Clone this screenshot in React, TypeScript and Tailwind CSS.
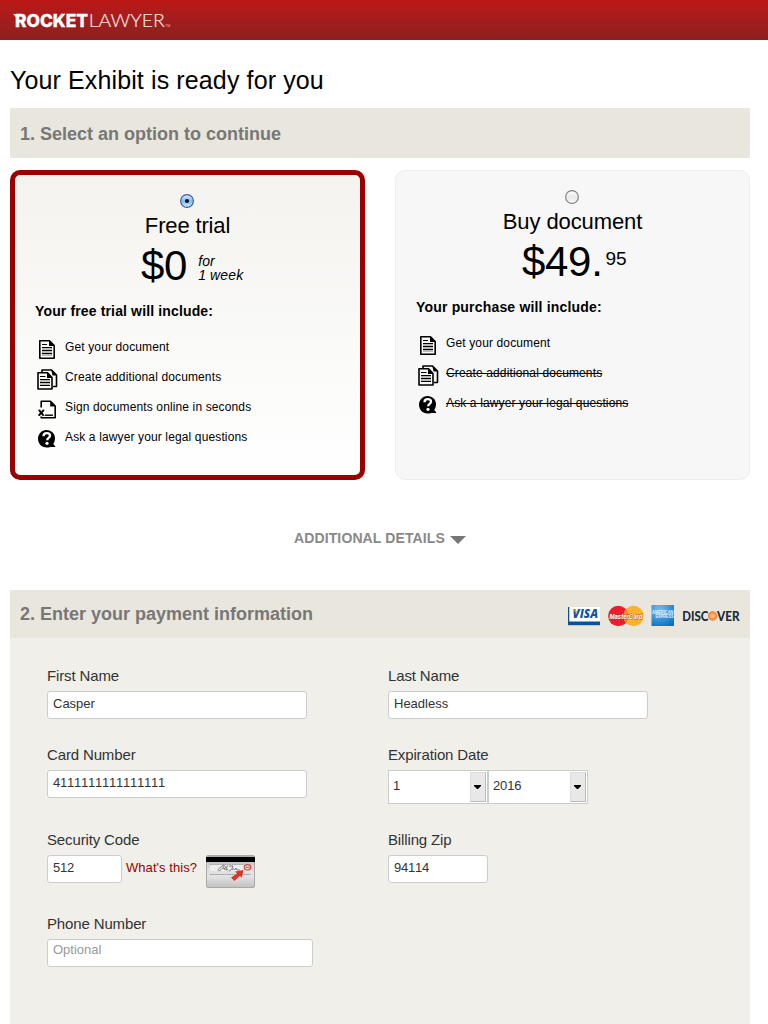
import type { ReactNode } from "react";

function Logo() {
  return (
    <svg width="170" height="24" viewBox="0 0 170 24" className="block overflow-visible">
      <text x="4" y="17.600" fill="#fff" stroke="#fff" strokeWidth=".3" fontFamily="Inter, sans-serif" fontWeight="800" fontSize="17" textLength="73" lengthAdjust="spacingAndGlyphs">ROCKET</text>
      <path d="M2.200 5.100H8V8.200H5Z" fill="#fff" />
      <text x="77.700" y="17.600" fill="#fff" stroke="#fff" strokeWidth=".15" fontFamily="Lato, sans-serif" fontWeight="300" fontSize="17.200" textLength="76" lengthAdjust="spacingAndGlyphs" opacity=".9">LAWYER</text>
      <text x="154" y="17.600" fill="#f0b8b8" fontFamily="Liberation Sans, sans-serif" fontSize="3.500">TM</text>
    </svg>
  );
}

function DocIcon() {
  return (
    <svg width="22" height="22" viewBox="0 0 22 22" className="block">
      <path d="M2.800 1.800H12.500L17.200 6.500V19.200H2.800Z" fill="none" stroke="#000" strokeWidth="1.600" strokeLinejoin="round" />
      <path d="M12 1.500L17.500 7H12Z" />
      <path d="M5 5.500H10M5 8.500H15M5 11.500H15M5 14.500H15" stroke="#000" strokeWidth="1" />
      <path d="M5 10H15M5 13H15M5 16H15" stroke="#666" strokeWidth="1.500" opacity=".55" />
    </svg>
  );
}

function DocsIcon() {
  return (
    <svg width="22" height="22" viewBox="0 0 22 22" className="block">
      <path d="M5 3V1H14.500L19.500 6V17.500H16" fill="none" stroke="#000" strokeWidth="1.600" strokeLinejoin="round" />
      <path d="M14.200 .8L19.800 6.600H15.600Z" />
      <path d="M1 3.800H10.500L15 8.500V20H1Z" fill="none" stroke="#000" strokeWidth="1.600" strokeLinejoin="round" />
      <path d="M10 3.500L15.400 9H10Z" />
      <path d="M3 7.500H8.500M3 10.500H13M3 13.500H13M3 16.500H13" stroke="#000" strokeWidth="1" />
      <path d="M3 12H13M3 15H13" stroke="#666" strokeWidth="1.500" opacity=".55" />
    </svg>
  );
}

function SignIcon() {
  return (
    <svg width="22" height="22" viewBox="0 0 22 22" className="block">
      <path d="M4.200 8.500V2.200H13.500L18.200 7V18.800H4.200V17.500" fill="none" stroke="#000" strokeWidth="1.600" strokeLinejoin="round" />
      <path d="M13.200 2L18.600 7.400H13.200Z" />
      <path d="M8 16.200H16" stroke="#000" strokeWidth="1.400" />
      <path d="M2.300 11.300L6.200 16.200M6.600 11.300L2 16.200" stroke="#000" strokeWidth="1.900" />
      <path d="M1.200 11.200H3.200M5.600 11.200H7.400M1.200 16.300H3.200M5.400 16.300H7.400" stroke="#000" strokeWidth="1" />
    </svg>
  );
}

function AskIcon() {
  return (
    <svg width="22" height="22" viewBox="1 0 22 22" className="block">
      <path d="M10.500 1C15.500 1 19 4.600 19 9.300C19 11.800 18 14 17.200 15.100L19.200 17.300V18H14.500C13.300 18.400 12 18.600 10.500 18.600C5.500 18.600 2 14.500 2 9.800S5.500 1 10.500 1Z" />
      <path d="M7.500 7.200C7.500 5.200 8.900 4.200 10.800 4.200C12.800 4.200 14 5.200 14 6.700C14 8.900 11.200 8.900 11.200 11.200" fill="none" stroke="#fff" strokeWidth="2.300" />
      <circle cx="11" cy="14.300" r="1.600" fill="#fff" />
    </svg>
  );
}

function Feature({ icon, children, off }: { icon: ReactNode; children: ReactNode; off?: boolean }) {
  return (
    <li className="flex h-[30px] items-start">
      <span className="-mt-px ml-[2px] w-[28px] shrink-0">{icon}</span>
      <span className={off ? "text-[12px] leading-[14px] tracking-[0.13px] line-through" : "text-[12px] leading-[14px] tracking-[0.13px]"}>{children}</span>
    </li>
  );
}

function Radio({ on }: { on?: boolean }) {
  return (
    <svg width="14" height="14" viewBox="0 0 14 14" className="mr-[2px] block">
      <defs>
        <linearGradient id="radioOn" x1="0" y1="0" x2="0" y2="1">
          <stop offset="0" stopColor="#dcefff" />
          <stop offset=".5" stopColor="#7fbcf4" />
          <stop offset="1" stopColor="#c4f2ff" />
        </linearGradient>
        <linearGradient id="radioOff" x1="0" y1="0" x2="0" y2="1">
          <stop offset="0" stopColor="#fff" />
          <stop offset=".5" stopColor="#e8e8e8" />
          <stop offset="1" stopColor="#fafafa" />
        </linearGradient>
      </defs>
      <circle cx="7" cy="7" r="6.400" fill={on ? "url(#radioOn)" : "url(#radioOff)"} stroke={on ? "#4d5590" : "#808080"} strokeWidth="1.100" />
      {on && <circle cx="7" cy="7" r="2.100" fill="#05101e" />}
    </svg>
  );
}

function CardLogos() {
  return (
    <svg width="174" height="24" viewBox="0 0 174 24" className="block overflow-visible">
      <rect x="0" y="2" width="32" height="15" fill="#fff" />
      <rect x="0" y="16.500" width="32" height="3.700" fill="#0b5197" />
      <path d="M0 2H1.300V20H0Z" fill="#0b5197" />
      <text x="4.500" y="13" fill="#12559c" fontFamily="Open Sans, sans-serif" fontWeight="800" fontStyle="italic" fontSize="12" textLength="25.500" lengthAdjust="spacingAndGlyphs">VISA</text>
      <path d="M4.500 4.500H8L9 8Z" fill="#e9a52f" />
      <circle cx="50.300" cy="11" r="10.200" fill="#ed1c2e" />
      <circle cx="65.500" cy="11" r="10.200" fill="#fcb131" />
      <path d="M57.900 4.200A10.200 10.200 0 0 1 57.900 17.800A10.200 10.200 0 0 1 57.900 4.200Z" fill="#f4852b" />
      <text x="41.500" y="13.600" fill="#fff" stroke="#a8402c" strokeWidth=".8" paintOrder="stroke" fontFamily="Liberation Sans, sans-serif" fontWeight="700" fontStyle="italic" fontSize="7.500" textLength="33" lengthAdjust="spacingAndGlyphs">MasterCard</text>
      <defs>
        <radialGradient id="amex" cx=".35" cy=".2" r=".9">
          <stop offset="0" stopColor="#79b9eb" />
          <stop offset="1" stopColor="#0871c5" />
        </radialGradient>
        <radialGradient id="disc">
          <stop offset="0" stopColor="#ffc98f" />
          <stop offset="1" stopColor="#f37b2d" />
        </radialGradient>
      </defs>
      <rect x="83.500" y="0" width="22.500" height="21" fill="url(#amex)" />
      <g fill="#e8f4fd" fontFamily="Liberation Sans, sans-serif" fontWeight="700" fontSize="5">
        <text x="84" y="9" textLength="21.500" lengthAdjust="spacingAndGlyphs">AMERICAN</text>
        <text x="87.500" y="13.300" textLength="18" lengthAdjust="spacingAndGlyphs">EXPRESS</text>
      </g>
      <g fill="#1c2b38" fontFamily="Lato, sans-serif" fontWeight="900" fontSize="13.300">
        <text x="114.300" y="15.800" textLength="26" lengthAdjust="spacingAndGlyphs">DISC</text>
        <text x="149" y="15.800" textLength="22.500" lengthAdjust="spacingAndGlyphs">VER</text>
      </g>
      <circle cx="144.600" cy="11" r="4.700" fill="url(#disc)" />
    </svg>
  );
}

function CvvCard() {
  return (
    <svg width="49" height="33" viewBox="0 0 49 33" className="block">
      <defs>
        <linearGradient id="plastic" x1="0" y1="0" x2="0" y2="1">
          <stop offset="0" stopColor="#aaa" />
          <stop offset=".4" stopColor="#ddd" />
          <stop offset=".65" stopColor="#e4e4e4" />
          <stop offset="1" stopColor="#c0c0c0" />
        </linearGradient>
      </defs>
      <rect x=".5" y=".5" width="48" height="32" rx="1.500" fill="url(#plastic)" stroke="#aaa9a5" />
      <rect y="2" width="49" height="5" fill="#000" />
      <rect x="4" y="9" width="34" height="7" fill="#eee" />
      <path d="M4 9.500H38M4 19.500H45" stroke="#888" strokeWidth="1" strokeDasharray="2 .4" opacity=".7" />
      <path d="M11.500 15Q17 9.500 18.500 10.500Q14.500 16.500 12.500 15.500M17 13.500Q18.500 12 18.500 14.500L20 11M21.500 10.500L19.800 15L22 14.500M23 11H27Q25 17 22.500 15.500M26 15Q27.500 12 28.500 15L30 13L31 15H34" fill="none" stroke="#555" strokeWidth=".7" />
      <ellipse cx="41.500" cy="12.300" rx="3.300" ry="2.700" fill="#ddd" stroke="#d94840" strokeWidth="1.200" />
      <path d="M39.500 12.300H43.500" stroke="#866" strokeWidth="1" />
      <path d="M37.500 15L35.800 22.500L33.800 21L28.300 26L25 22.500L31 18.800L29.300 16.500Z" fill="#d9352a" />
    </svg>
  );
}

function Box({ className, children }: { className: string; children: ReactNode }) {
  return (
    <div className={"h-7 rounded-[3px] border border-[#ccc] bg-white pl-[5px] text-[13px] [font-kerning:none] " + className}>{children}</div>
  );
}

function Field({ label, children }: { label: string; children: ReactNode }) {
  return (
    <div>
      <div className="mb-[7px] h-4 text-[15px] leading-4 tracking-[-0.14px]">{label}</div>
      {children}
    </div>
  );
}

function Select({ children }: { children: ReactNode }) {
  return (
    <div className="flex h-[34px] w-[100px] border border-[#ccc] bg-white p-px">
      <span className="flex-1 pl-[3px] text-[13px] leading-[28px] tracking-[-0.15px]">{children}</span>
      <span className="flex h-[30px] w-4 items-center justify-center border border-t-[#ddd] border-r-[#bbb] border-b-[#bbb] border-l-[#ddd] bg-[#e8e8e8]">
        <svg width="7" height="4" viewBox="0 0 7 4" className="mr-px"><path d="M0 0H7V1L4 4H3L0 1Z" /></svg>
      </span>
    </div>
  );
}

export default function App() {
  return (
    <div className="h-[1024px] w-[768px] overflow-hidden bg-white font-['Liberation_Sans',Arial,sans-serif] text-black">
      <header className="h-10 bg-linear-to-b from-[#bd1717] to-[#8b2020] pt-[9px] pl-[11px]">
        <Logo />
      </header>
      <main className="px-[10px]">
        <h1 className="h-[68px] pt-[25px] text-[25px] leading-[30px] tracking-[0.12px]">Your Exhibit is ready for you</h1>
        <h2 className="h-[50px] w-[740px] bg-[#e8e6dd] pl-[10px] text-[18px] leading-[52px] font-bold text-[#777]">1. Select an option to continue</h2>
        <div className="mt-3 flex gap-[30px]">
          <section className="h-[310px] w-[355px] rounded-[10px] border-[5px] border-[#900] bg-linear-to-b from-[#f4f3ef] to-white px-5 pt-[19px]">
            <div className="flex justify-center"><Radio on /></div>
            <div className="mt-1 text-center text-[22px] leading-[28px] tracking-[-0.15px]">Free trial</div>
            <div className="flex h-12 pl-[106px]">
              <span className="pt-[2px] text-[42px] leading-[48px] tracking-[-0.3px]">$0</span>
              <span className="mt-[14px] ml-[11px] text-[14px] leading-[14px] tracking-[0.15px] italic">for<br />1 week</span>
            </div>
            <div className="mt-[14px] text-[14px] leading-[18px] font-bold tracking-[0.14px]">Your free trial will include:</div>
            <ul className="mt-5">
              <Feature icon={<DocIcon />}>Get your document</Feature>
              <Feature icon={<DocsIcon />}>Create additional documents</Feature>
              <Feature icon={<SignIcon />}>Sign documents online in seconds</Feature>
              <Feature icon={<AskIcon />}>Ask a lawyer your legal questions</Feature>
            </ul>
          </section>
          <section className="h-[310px] w-[355px] rounded-[10px] border border-[#eee] bg-[#f7f7f7] px-5 pt-[19px]">
            <div className="flex justify-center"><Radio /></div>
            <div className="mt-1 text-center text-[22px] leading-[28px] tracking-[-0.1px]">Buy document</div>
            <div className="flex h-12 pl-[106px]">
              <span className="pt-[2px] text-[42px] leading-[48px] tracking-[-0.3px]">$49.</span>
              <span className="mt-[12px] ml-[3px] text-[19px] leading-[22px]">95</span>
            </div>
            <div className="mt-[14px] text-[14px] leading-[18px] font-bold tracking-[0.18px]">Your purchase will include:</div>
            <ul className="mt-5">
              <Feature icon={<DocIcon />}>Get your document</Feature>
              <Feature icon={<DocsIcon />} off>Create additional documents</Feature>
              <Feature icon={<AskIcon />} off>Ask a lawyer your legal questions</Feature>
            </ul>
          </section>
        </div>
        <div className="mt-12 flex h-5 w-[740px] items-center justify-center gap-[5px] text-[14px] leading-5 font-bold tracking-[0.12px] text-[#888]">
          ADDITIONAL DETAILS
          <svg width="16" height="8" viewBox="0 0 16 8" className="mt-[3px]"><path d="M0 0H16L8 8Z" fill="#777" /></svg>
        </div>
        <section className="mt-[42px] h-[434px] w-[740px] bg-[#f0efea] text-[#333]">
          <div className="flex h-12 items-start justify-between bg-[#e8e6dd] pl-[10px]">
            <h2 className="text-[18px] leading-[49px] font-bold text-[#777]">2. Enter your payment information</h2>
            <div className="mr-2 pt-[15px]"><CardLogos /></div>
          </div>
          <div className="grid grid-cols-[341px_341px] grid-rows-[79px_85px_84px_60px] pt-[30px] pl-[37px]">
            <Field label="First Name"><Box className="w-[260px] leading-[24px]">Casper</Box></Field>
            <Field label="Last Name"><Box className="w-[260px] leading-[24px]">Headless</Box></Field>
            <Field label="Card Number"><Box className="w-[260px] leading-[24px] tracking-[-0.23px]">4111111111111111</Box></Field>
            <Field label="Expiration Date"><div className="flex"><Select>1</Select><Select>2016</Select></div></Field>
            <Field label="Security Code">
              <div className="flex items-start">
                <Box className="w-[75px] leading-[24px] tracking-[-0.2px]">512</Box>
                <span className="ml-1 w-20 text-[13px] leading-[26px] tracking-[0.06px] text-[#900]">What's this?</span>
                <CvvCard />
              </div>
            </Field>
            <Field label="Billing Zip"><Box className="w-[100px] leading-[24px] tracking-[-0.23px]">94114</Box></Field>
            <Field label="Phone Number"><Box className="w-[266px] leading-[20px] text-[#999]">Optional</Box></Field>
          </div>
        </section>
      </main>
    </div>
  );
}
